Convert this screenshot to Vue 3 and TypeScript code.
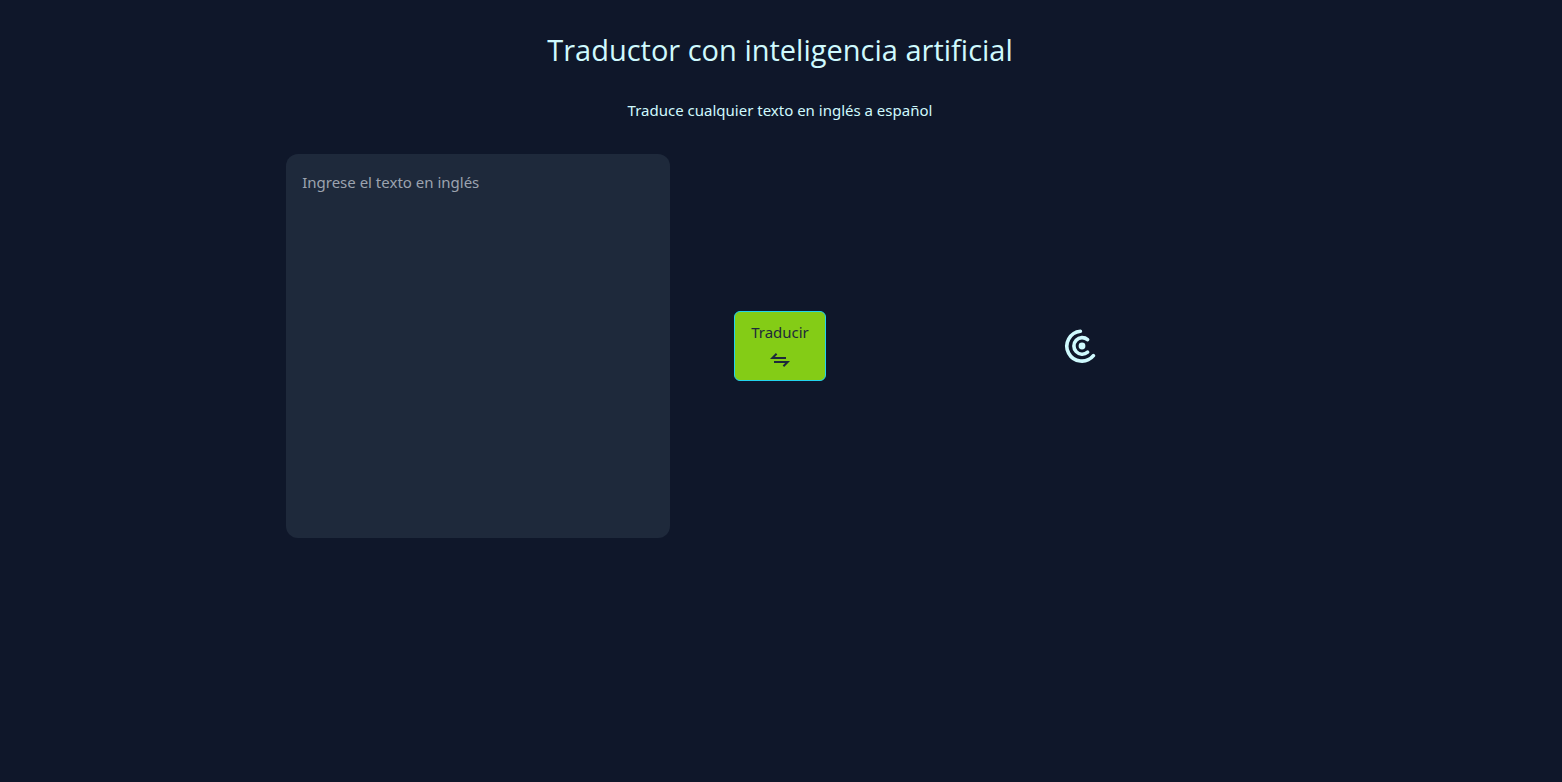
<script setup lang="ts">
import { ref } from 'vue'

const text = ref<string>('')
const loading = ref<boolean>(true)

function translate(): void {
  loading.value = true
}
</script>

<template>
  <main class="page">
    <h1>Traductor con inteligencia artificial</h1>
    <p class="subtitle">Traduce cualquier texto en inglés a español</p>
    <form class="translator" @submit.prevent="translate">
      <textarea v-model="text" class="source" aria-label="Ingrese el texto en inglés" placeholder="Ingrese el texto en inglés"></textarea>
      <button class="action" type="submit">
        <span>Traducir</span>
        <svg width="24" height="24" viewBox="0 0 24 24" fill="none" stroke="currentColor" stroke-width="2" aria-hidden="true">
          <path d="M18 10H4.4L8.6 5.8" />
          <path d="M6 14H19.6L15.4 18.2" />
        </svg>
      </button>
      <div class="result" aria-live="polite">
        <svg v-if="loading" width="36" height="36" viewBox="0 0 36 36" fill="none" stroke="currentColor" stroke-width="3.6" stroke-linecap="round" aria-hidden="true">
          <path d="M16.4 3.2A15 15 0 1 0 29.4 27.7" />
          <path d="M23.6 11.6A8.3 8.3 0 1 0 23.6 24.2" />
          <circle cx="18" cy="18" r="3.4" fill="currentColor" stroke="none" />
        </svg>
      </div>
    </form>
  </main>
</template>

<style>
body {
  margin: 0;
  background: #0f172a;
}
</style>

<style scoped>
.page {
  box-sizing: border-box;
  min-height: 100vh;
  padding: 32px 2px 32px 0;
  color: #cffafe;
  background: #0f172a;
  font-family: "Noto Sans", sans-serif;
  font-size: 15px;
  line-height: 24px;
  text-align: center;
}
h1 {
  margin: 0;
  font-family: "Open Sans", "Noto Sans", sans-serif;
  font-size: 29px;
  font-weight: 400;
  line-height: 36px;
}
.subtitle {
  margin: 30px 0 32px;
}
.translator {
  display: flex;
  flex-wrap: wrap;
  align-items: center;
  justify-content: center;
  gap: 64px;
}
.source,
.result {
  box-sizing: border-box;
  width: 384px;
  height: 384px;
}
.source {
  padding: 16px;
  border: 0;
  border-radius: 12px;
  outline: none;
  resize: none;
  color: #cffafe;
  background: #1e293b;
  font: inherit;
}
.source::placeholder {
  color: #9ca3af;
}
.result {
  display: flex;
  align-items: center;
  justify-content: center;
}
.action {
  display: flex;
  flex-direction: column;
  align-items: center;
  gap: 4px;
  padding: 8px 16px;
  border: 1px solid #22d3ee;
  border-radius: 6px;
  color: #1e293b;
  background: #84cc16;
  font: inherit;
  cursor: pointer;
}
</style>
